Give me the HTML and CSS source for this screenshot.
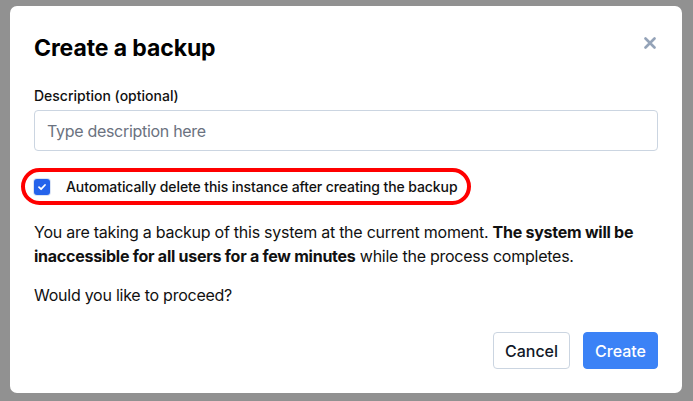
FILE: index.html
```html
<!DOCTYPE html>
<html>
<head>
<meta charset="utf-8">
<link rel="stylesheet" href="styles.css">
</head>
<body>
<div class="modal">
  <div class="header">
    <h2 class="title">Create a backup</h2>
    <button class="close" aria-label="Close">
      <svg width="12" height="12" viewBox="0 0 12 12"><path d="M1.5 1.5 L10.5 10.5 M10.5 1.5 L1.5 10.5" stroke="#94a3b8" stroke-width="2.6" stroke-linecap="round"/></svg>
    </button>
  </div>
  <label class="label" for="desc">Description (optional)</label>
  <input id="desc" class="input" type="text" placeholder="Type description here">
  <div class="check-row">
    <span class="checkbox">
      <svg width="10" height="10" viewBox="0 0 10 10"><path d="M2 5.2 L4.1 7.2 L8 3" fill="none" stroke="#fff" stroke-width="1.8" stroke-linecap="round" stroke-linejoin="round"/></svg>
    </span>
    <span class="check-label">Automatically delete this instance after creating the backup</span>
  </div>
  <p class="text">You are taking a backup of this system at the current moment. <strong>The system will be inaccessible for all users for a few minutes</strong> while the process completes.</p>
  <p class="text text-second">Would you like to proceed?</p>
  <div class="actions">
    <button class="btn btn-secondary">Cancel</button>
    <button class="btn btn-primary">Create</button>
  </div>
</div>
</body>
</html>
```

FILE: styles.css
```css
* { box-sizing: border-box; }
html, body {
  margin: 0;
  padding: 0;
  background: #919191;
  width: 693px;
  height: 401px;
  overflow: hidden;
  font-family: Inter, "Liberation Sans", sans-serif;
  color: #111;
}
.modal {
  margin: 6px 0 0 10px;
  width: 672px;
  height: 387px;
  background: #fff;
  border-radius: 7px;
  padding: 28px 24px 24px 24px;
  display: flex;
  flex-direction: column;
}
.header {
  display: flex;
  justify-content: space-between;
  align-items: flex-start;
}
.title {
  margin: 0;
  font-size: 23px;
  line-height: 28px;
  font-weight: 700;
  letter-spacing: -0.1px;
  color: #000;
}
.close {
  border: 0;
  background: none;
  padding: 0;
  margin: 3px 2px 0 0;
  width: 12px;
  height: 12px;
  display: flex;
}
.label {
  margin-top: 24px;
  font-size: 14px;
  line-height: 20px;
  font-weight: 500;
  color: #111;
}
.input {
  margin-top: 4px;
  width: 100%;
  height: 41px;
  border: 1px solid #cbd5e1;
  border-radius: 4px;
  padding: 0 12px;
  font-family: inherit;
  font-size: 16px;
  letter-spacing: -0.3px;
  color: #111;
  outline: none;
}
.input::placeholder { color: #6b7280; }
.check-row {
  margin-top: 17px;
  margin-left: -13px;
  align-self: flex-start;
  display: flex;
  align-items: center;
  height: 37px;
  width: 450px;
  border: 4px solid #ff0000;
  border-radius: 999px;
  padding-left: 9px;
}
.checkbox {
  width: 16px;
  height: 16px;
  border-radius: 3px;
  background: #2563eb;
  box-shadow: 0 0 0 1px #dbe4f5;
  display: flex;
  align-items: center;
  justify-content: center;
}
.check-label {
  margin-left: 16px;
  font-size: 14px;
  font-weight: 500;
  letter-spacing: -0.1px;
  color: #111;
}
.text {
  margin: 15px 0 0 0;
  font-size: 16px;
  line-height: 24px;
  letter-spacing: -0.25px;
  color: #111;
}
.text-second { margin-top: 15px; }
.text strong { font-weight: 700; }
.actions {
  margin-top: auto;
  display: flex;
  justify-content: flex-end;
  gap: 13px;
}
.btn {
  height: 37px;
  border-radius: 4px;
  font-family: inherit;
  font-size: 16px;
  font-weight: 500;
  padding: 0 11px;
}
.btn-secondary {
  background: #fff;
  border: 1px solid #cbd5e1;
  color: #111827;
}
.btn-primary {
  background: #3b82f6;
  border: 1px solid #3b82f6;
  color: #fff;
}
```
